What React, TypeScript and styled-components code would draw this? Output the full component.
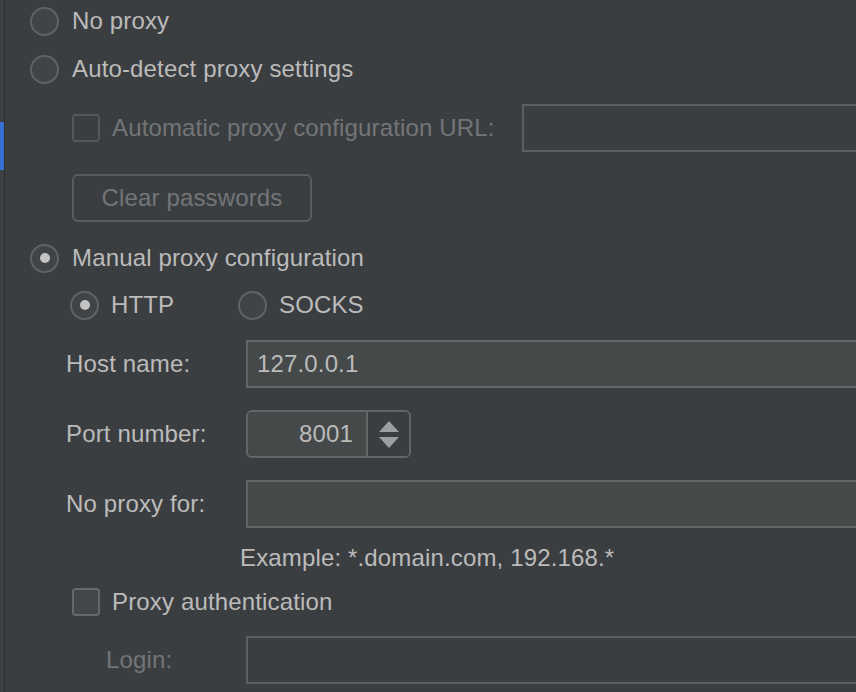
import React from 'react';
import styled, { createGlobalStyle } from 'styled-components';

const Global = createGlobalStyle`
  html, body { margin: 0; padding: 0; background: #3b3e41; }
  body { font-family: "Liberation Sans", Arial, sans-serif; }
  #root { width: 856px; height: 692px; }
`;

const Frame = styled.div`
  display: flex;
  width: 856px;
  height: 692px;
  overflow: hidden;
  background: #3b3e41;
`;

const Gutter = styled.div`
  width: 4px;
  flex: none;
  background: #3d4043;
  border-right: 1px solid #2e3032;
  display: flex;
  flex-direction: column;
`;

const GutterMark = styled.div`
  margin-top: 122px;
  height: 48px;
  background: #3672d4;
`;

const Panel = styled.div`
  flex: 1;
  min-width: 0;
  display: flex;
  flex-direction: column;
  padding-left: 25px;
  color: #bbbbbb;
  font-size: 24px;
  letter-spacing: 0.15px;
`;

const Row = styled.div<{ $top: number; $h: number; $indent?: number }>`
  display: flex;
  align-items: center;
  flex: none;
  height: ${(p) => p.$h}px;
  margin-top: ${(p) => p.$top}px;
  padding-left: ${(p) => p.$indent ?? 0}px;
`;

const RadioCircle = styled.span<{ $checked?: boolean }>`
  width: 29px;
  height: 29px;
  box-sizing: border-box;
  border-radius: 50%;
  border: 2px solid #606366;
  background: #404447;
  display: flex;
  align-items: center;
  justify-content: center;
  flex: none;
  &::after {
    content: '';
    width: 10px;
    height: 10px;
    border-radius: 50%;
    background: #c4c4c4;
    display: ${(p) => (p.$checked ? 'block' : 'none')};
  }
`;

const CheckBox = styled.span<{ $disabled?: boolean }>`
  width: 28px;
  height: 28px;
  box-sizing: border-box;
  border-radius: 4px;
  border: 2px solid ${(p) => (p.$disabled ? '#55585a' : '#67696b')};
  background: ${(p) => (p.$disabled ? 'transparent' : '#43474a')};
  flex: none;
`;

const OptLabel = styled.span<{ $disabled?: boolean; $gap?: number }>`
  margin-left: ${(p) => p.$gap ?? 13}px;
  color: ${(p) => (p.$disabled ? '#737577' : '#bbbbbb')};
  white-space: nowrap;
`;

const RadioOption = styled.div<{ $width?: number }>`
  display: flex;
  align-items: center;
  width: ${(p) => (p.$width ? `${p.$width}px` : 'auto')};
  flex: none;
`;

const FormLabel = styled.span<{ $disabled?: boolean; $width: number; $indent?: number }>`
  width: ${(p) => p.$width}px;
  margin-left: ${(p) => p.$indent ?? 0}px;
  flex: none;
  white-space: nowrap;
  color: ${(p) => (p.$disabled ? '#737577' : '#bbbbbb')};
`;

const Field = styled.div<{ $disabled?: boolean; $gap?: number }>`
  flex: 1;
  height: 48px;
  box-sizing: border-box;
  margin-left: ${(p) => p.$gap ?? 0}px;
  margin-right: -12px;
  border: 2px solid ${(p) => (p.$disabled ? '#5c5e60' : '#646567')};
  background: ${(p) => (p.$disabled ? 'transparent' : '#45494a')};
  display: flex;
  align-items: center;
  padding-left: 9px;
  color: #bbbbbb;
  white-space: nowrap;
`;

const Button = styled.div`
  width: 240px;
  height: 48px;
  box-sizing: border-box;
  border: 2px solid #595b5d;
  border-radius: 6px;
  display: flex;
  align-items: center;
  justify-content: center;
  color: #737577;
`;

const Spinner = styled.div`
  display: flex;
  width: 165px;
  height: 48px;
  box-sizing: border-box;
  border: 2px solid #646567;
  border-radius: 6px;
  overflow: hidden;
`;

const SpinValue = styled.div`
  flex: 1;
  background: #45494a;
  display: flex;
  align-items: center;
  justify-content: flex-end;
  padding-right: 13px;
`;

const SpinButtons = styled.div`
  width: 43px;
  box-sizing: border-box;
  border-left: 2px solid #646567;
  background: #3b3e41;
  display: flex;
  flex-direction: column;
  align-items: center;
  justify-content: center;
  gap: 5px;
`;

const Hint = styled.span`
  color: #bbbbbb;
  white-space: nowrap;
`;

const Arrow = ({ down }: { down?: boolean }) => (
  <svg width="20" height="11" viewBox="0 0 20 11">
    <polygon points={down ? '0,0 20,0 10,11' : '10,0 20,11 0,11'} fill="#9c9fa2" />
  </svg>
);

export default function App() {
  return (
    <Frame>
      <Global />
      <Gutter>
        <GutterMark />
      </Gutter>
      <Panel>
        <Row $top={0} $h={42}>
          <RadioOption>
            <RadioCircle />
            <OptLabel>No proxy</OptLabel>
          </RadioOption>
        </Row>
        <Row $top={3} $h={48}>
          <RadioOption>
            <RadioCircle />
            <OptLabel>Auto-detect proxy settings</OptLabel>
          </RadioOption>
        </Row>
        <Row $top={11} $h={48} $indent={42}>
          <CheckBox $disabled />
          <OptLabel $disabled $gap={12}>Automatic proxy configuration URL:</OptLabel>
          <Field $disabled $gap={27} />
        </Row>
        <Row $top={22} $h={48} $indent={42}>
          <Button>Clear passwords</Button>
        </Row>
        <Row $top={12} $h={48}>
          <RadioOption>
            <RadioCircle $checked />
            <OptLabel>Manual proxy configuration</OptLabel>
          </RadioOption>
        </Row>
        <Row $top={0} $h={46} $indent={40}>
          <RadioOption $width={168}>
            <RadioCircle $checked />
            <OptLabel $gap={12}>HTTP</OptLabel>
          </RadioOption>
          <RadioOption>
            <RadioCircle />
            <OptLabel $gap={12}>SOCKS</OptLabel>
          </RadioOption>
        </Row>
        <Row $top={12} $h={48} $indent={36}>
          <FormLabel $width={180}>Host name:</FormLabel>
          <Field>127.0.0.1</Field>
        </Row>
        <Row $top={22} $h={48} $indent={36}>
          <FormLabel $width={180}>Port number:</FormLabel>
          <Spinner>
            <SpinValue>8001</SpinValue>
            <SpinButtons>
              <Arrow />
              <Arrow down />
            </SpinButtons>
          </Spinner>
        </Row>
        <Row $top={22} $h={48} $indent={36}>
          <FormLabel $width={180}>No proxy for:</FormLabel>
          <Field />
        </Row>
        <Row $top={12} $h={36} $indent={210}>
          <Hint>Example: *.domain.com, 192.168.*</Hint>
        </Row>
        <Row $top={2} $h={48} $indent={42}>
          <CheckBox />
          <OptLabel $gap={12}>Proxy authentication</OptLabel>
        </Row>
        <Row $top={10} $h={48} $indent={36}>
          <FormLabel $width={140} $indent={40} $disabled>Login:</FormLabel>
          <Field $disabled />
        </Row>
      </Panel>
    </Frame>
  );
}
